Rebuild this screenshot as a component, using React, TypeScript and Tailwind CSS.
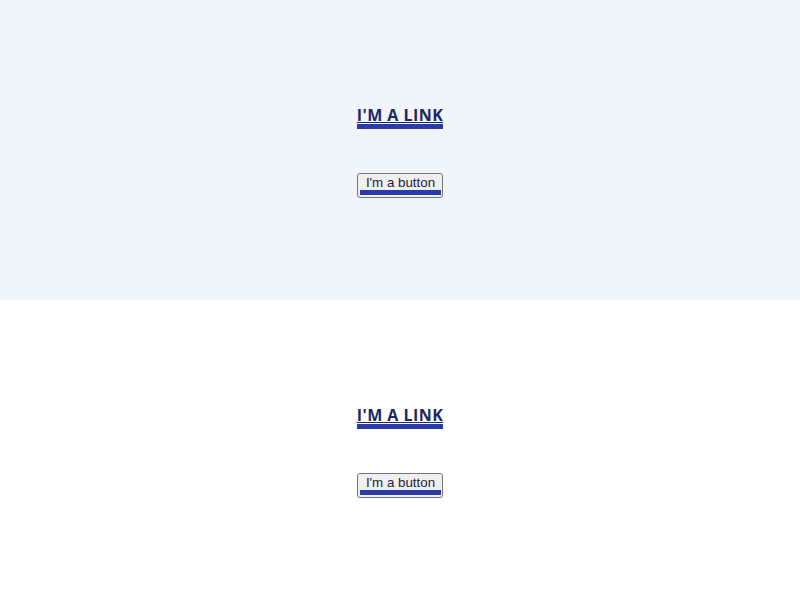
import React from "react";

function Block({ bg }: { bg: string }) {
  return (
    <div className={`h-[300px] flex flex-col items-center justify-center ${bg}`}>
      <a
        href="#"
        className="mt-[5px] inline-block uppercase font-bold text-[16px] leading-[16px] tracking-[0.45px] pb-[1px] text-[#1c2766] underline border-b-[5px] border-[#2a3aa8]"
        style={{ fontFamily: '"Open Sans", sans-serif' }}
      >
        I'M A LINK
      </a>
      <button
        className="mt-[44px] flex flex-col items-stretch border border-[#767676] rounded-[3px] bg-[#efefef] pt-[1px] pb-[2px] pl-[2px] pr-[1px] text-[13.33px] text-[#1e2338]"
        style={{ fontFamily: '"Liberation Sans", Arial, sans-serif' }}
      >
        <span className="block leading-[15px] px-[6px]">I'm a button</span>
        <span className="block h-[5px] bg-[#2a3aa8]" />
      </button>
    </div>
  );
}

export default function App() {
  return (
    <div className="w-[800px]">
      <Block bg="bg-[#f0f4fb]" />
      <Block bg="bg-white" />
    </div>
  );
}
